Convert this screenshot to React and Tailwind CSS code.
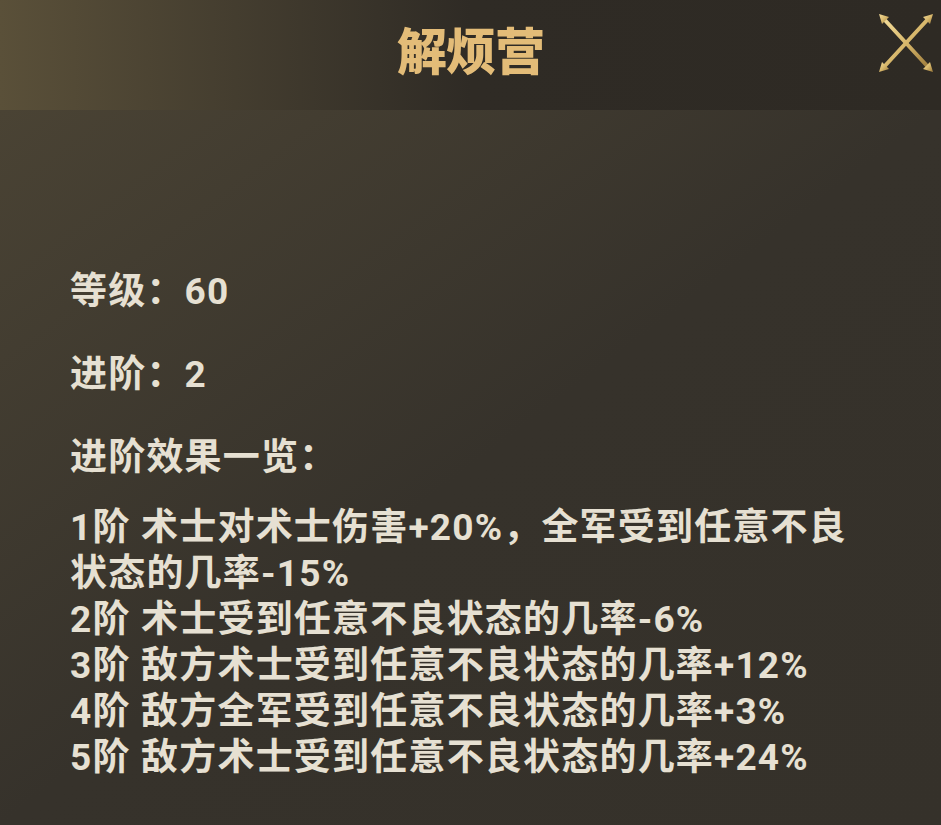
const levels = [
  { step: "1阶", text: "术士对术士伤害+20%，全军受到任意不良状态的几率-15%" },
  { step: "2阶", text: "术士受到任意不良状态的几率-6%" },
  { step: "3阶", text: "敌方术士受到任意不良状态的几率+12%" },
  { step: "4阶", text: "敌方全军受到任意不良状态的几率+3%" },
  { step: "5阶", text: "敌方术士受到任意不良状态的几率+24%" },
];

const CloseIcon = () => (
  <svg width="62" height="64" viewBox="0 0 62 64" fill="none">
    <defs>
      <linearGradient id="gold" x1="0" y1="0" x2="1" y2="1">
        <stop offset="0" stopColor="#f3dc9a" />
        <stop offset="0.5" stopColor="#d8b86c" />
        <stop offset="1" stopColor="#9c7a3a" />
      </linearGradient>
    </defs>
    <g stroke="url(#gold)" strokeLinecap="round">
      <line x1="8" y1="8" x2="54" y2="58" strokeWidth="4" />
      <line x1="54" y1="8" x2="8" y2="58" strokeWidth="4" />
    </g>
    <g fill="url(#gold)">
      <path d="M4 4 L14 7 L7 14 Z" />
      <path d="M58 4 L55 14 L48 7 Z" />
      <path d="M4 62 L7 52 L14 59 Z" />
      <path d="M58 62 L48 59 L55 52 Z" />
    </g>
  </svg>
);

export default function App() {
  return (
    <div
      className="w-[941px] h-[825px] overflow-hidden bg-[#35312a] text-[#e6e0d2]"
      style={{ fontFamily: 'Roboto, "Noto Sans CJK SC", sans-serif' }}
    >
      {/* Header */}
      <div className="relative h-[110px] flex items-center justify-center pb-[14px] bg-gradient-to-r from-[#5a5039] via-[#2f2b25] to-[#2e2a24]">
        <h1
          className="text-[50px] font-black text-[#e3bc78] tracking-[-1px] leading-none"
          style={{ fontFamily: '"Noto Sans CJK SC", sans-serif' }}
        >
          解烦营
        </h1>
        <div className="absolute right-[4px] top-[10px]">
          <CloseIcon />
        </div>
      </div>

      {/* Body */}
      <div className="bg-gradient-to-br from-[#4a4334] via-[#36322b] to-[#35312a] h-[715px] pl-[70px] pt-[159px] tracking-[1.2px]">
        <p className="text-[37px] font-bold leading-[46px]">等级：60</p>
        <p className="text-[37px] font-bold leading-[46px] mt-[37px]">进阶：2</p>
        <p className="text-[37px] font-bold leading-[46px] mt-[37px]">进阶效果一览：</p>
        <div className="mt-[24px] w-[790px]">
          {levels.map((lv) => (
            <p key={lv.step} className="text-[37px] font-bold leading-[46px]">
              {lv.step} {lv.text}
            </p>
          ))}
        </div>
      </div>
    </div>
  );
}
